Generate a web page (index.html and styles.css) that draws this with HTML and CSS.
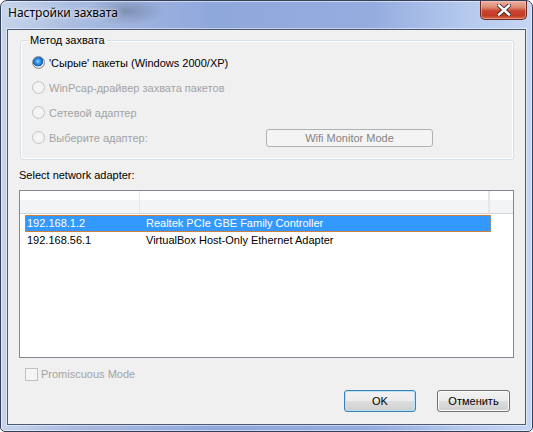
FILE: index.html
```html
<!DOCTYPE html>
<html>
<head>
<meta charset="utf-8">
<link rel="stylesheet" href="styles.css">
</head>
<body>
<div class="window">
  <div class="titlebar">
    <span class="title">Настройки захвата</span>
    <div class="close">
      <svg width="14" height="12" viewBox="0 0 14 12">
        <path d="M2 1.5 L12 10.5 M12 1.5 L2 10.5" stroke="#3a2a2a" stroke-width="4.2" stroke-linecap="square" fill="none"/>
        <path d="M2 1.5 L12 10.5 M12 1.5 L2 10.5" stroke="#ffffff" stroke-width="2.4" stroke-linecap="square" fill="none"/>
      </svg>
    </div>
  </div>
  <div class="client">
    <div class="group">
      <span class="legend">Метод захвата</span>
      <div class="opt"><span class="radio checked"></span><span>'Сырые' пакеты (Windows 2000/XP)</span></div>
      <div class="opt disabled"><span class="radio"></span><span>WinPcap-драйвер захвата пакетов</span></div>
      <div class="opt disabled"><span class="radio"></span><span>Сетевой адаптер</span></div>
      <div class="opt disabled"><span class="radio"></span><span class="opt-label">Выберите адаптер:</span><span class="flat-btn">Wifi Monitor Mode</span></div>
    </div>
    <div class="caption">Select network adapter:</div>
    <div class="list">
      <div class="lhead"><div class="hc c1"></div><div class="hc c2"></div><div class="hc c3"></div></div>
      <div class="rows">
        <div class="row sel"><span>192.168.1.2</span><span>Realtek PCIe GBE Family Controller</span></div>
        <div class="row"><span>192.168.56.1</span><span>VirtualBox Host-Only Ethernet Adapter</span></div>
      </div>
    </div>
    <div class="check disabled"><span class="cbox"></span><span>Promiscuous Mode</span></div>
    <div class="buttons">
      <span class="btn default">OK</span>
      <span class="btn cancel">Отменить</span>
    </div>
  </div>
</div>
</body>
</html>
```

FILE: styles.css
```css
html, body {
  margin: 0;
  padding: 0;
  background: #ffffff;
}
body {
  width: 533px;
  height: 432px;
  overflow: hidden;
  font-family: "Liberation Sans", Arial, sans-serif;
  font-size: 11px;
  color: #000;
}
.window {
  box-sizing: border-box;
  width: 533px;
  height: 432px;
  border: 1px solid #34405a;
  border-radius: 7px 7px 5px 5px;
  padding: 0 6px 6px 6px;
  background:
    radial-gradient(ellipse 40px 14px at 125px 10px, rgba(90,100,130,0.45), rgba(90,100,130,0) 100%),
    linear-gradient(90deg, #c7d4ea 0%, #a9bbe0 14%, #8fa8dc 40%, #95acdf 70%, #b6caee 88%, #c4d6f3 100%);
  box-shadow: inset 0 0 0 1px rgba(255,255,255,0.55);
  display: flex;
  flex-direction: column;
}
.titlebar {
  height: 28px;
  display: flex;
  align-items: flex-start;
}
.title {
  font-family: "Noto Sans", "Liberation Sans", sans-serif;
  font-size: 12px;
  line-height: 16px;
  margin-top: 4px;
  margin-left: 1px;
  color: #000;
  text-shadow: 0 0 6px rgba(255,255,255,0.9), 0 0 3px rgba(255,255,255,0.7);
}
.close {
  margin-left: auto;
  margin-right: -1px;
  width: 47px;
  height: 19px;
  box-sizing: border-box;
  border: 1px solid #6b2a22;
  border-top: none;
  border-radius: 0 0 5px 5px;
  background: linear-gradient(#eab0a2 0%, #e08a74 35%, #c9452f 55%, #c23a24 80%, #d8664a 100%);
  box-shadow: inset 0 0 0 1px rgba(255,210,200,0.45);
  display: flex;
  align-items: center;
  justify-content: center;
}
.client {
  flex: 1;
  border: 1px solid #4d5a74;
  background: #f0f0f0;
  display: flex;
  flex-direction: column;
  box-shadow: 0 0 0 1px rgba(255,255,255,0.45);
}
.group {
  position: relative;
  box-sizing: border-box;
  height: 120px;
  margin: 10px 11px 0 12px;
  padding: 9px 0 0 11px;
  border: 1px solid #d5dfe5;
  border-radius: 3px;
  box-shadow: inset 0 0 0 1px #ffffff;
}
.legend {
  position: absolute;
  top: -8px;
  left: 7px;
  padding: 0 2px;
  background: #f0f0f0;
  line-height: 14px;
}
.opt {
  height: 25px;
  display: flex;
  align-items: center;
}
.opt.disabled {
  color: #a3a3a3;
}
.radio {
  box-sizing: border-box;
  width: 13px;
  height: 13px;
  border-radius: 50%;
  margin-right: 4px;
  flex: none;
  border: 1px solid #c4c4c4;
  background: radial-gradient(circle at 50% 50%, #f7f7f7 0%, #f2f2f2 60%, #e9e9e9 100%);
}
.radio.checked {
  border: 1px solid #8b8b8b;
  background:
    radial-gradient(circle at 45% 40%, #8fd4ff 0%, #2a8ee3 30%, #145fb3 55%, rgba(20,95,179,0) 58%),
    radial-gradient(circle at 50% 50%, #f4f4f4 0%, #dedede 70%, #cfcfcf 100%);
}
.opt-label {
  width: 217px;
}
.flat-btn {
  box-sizing: border-box;
  width: 167px;
  height: 18px;
  border: 1px solid #adb2b5;
  border-radius: 3px;
  background: #f4f4f4;
  color: #838383;
  display: flex;
  align-items: center;
  justify-content: center;
  margin-top: 1px;
}
.caption {
  margin: 9px 0 0 11px;
  line-height: 13px;
}
.list {
  box-sizing: border-box;
  height: 168px;
  margin: 8px 11px 0 11px;
  border: 1px solid #828790;
  background: #ffffff;
}
.lhead {
  height: 22px;
  border-bottom: 1px solid #d5d5d5;
  display: flex;
  background: linear-gradient(#ffffff 0%, #ffffff 41%, #f3f4f6 41%, #f3f4f6 100%);
}
.hc {
  box-sizing: border-box;
  height: 22px;
}
.c1 {
  width: 120px;
  border-right: 1px solid #e3e6ea;
}
.c2 {
  width: 350px;
  border-right: 2px solid #e3e6ea;
}
.c3 {
  flex: 1;
}
.rows {
  padding: 1px 0 0 5px;
}
.row {
  box-sizing: border-box;
  width: 466px;
  height: 17px;
  border: 1px solid transparent;
  padding-left: 1px;
  display: grid;
  grid-template-columns: 119px 1fr;
  line-height: 15px;
  white-space: nowrap;
}
.row.sel {
  background: #3399ff;
  color: #ffffff;
  border: 1px dotted #d6894a;
}
.check {
  margin: 10px 0 0 17px;
  height: 13px;
  display: flex;
  align-items: center;
  line-height: 13px;
}
.check.disabled {
  color: #a3a3a3;
}
.cbox {
  box-sizing: border-box;
  width: 13px;
  height: 13px;
  border: 1px solid #c0c0c0;
  background: #f4f4f4;
  margin-right: 3px;
}
.buttons {
  display: flex;
  justify-content: flex-end;
  gap: 21px;
  margin-top: 9px;
  padding-right: 15px;
}
.btn {
  box-sizing: border-box;
  width: 73px;
  height: 22px;
  border: 1px solid #707070;
  border-radius: 3px;
  background: linear-gradient(#f2f2f2 0%, #ebebeb 48%, #dddddd 52%, #cfcfcf 100%);
  box-shadow: inset 0 0 0 1px #fbfbfb;
  display: flex;
  align-items: center;
  justify-content: center;
  color: #000;
}
.btn.default {
  width: 72px;
  border-color: #3c7fb1;
  box-shadow: inset 0 0 0 1px #b4e2f7;
}
```
